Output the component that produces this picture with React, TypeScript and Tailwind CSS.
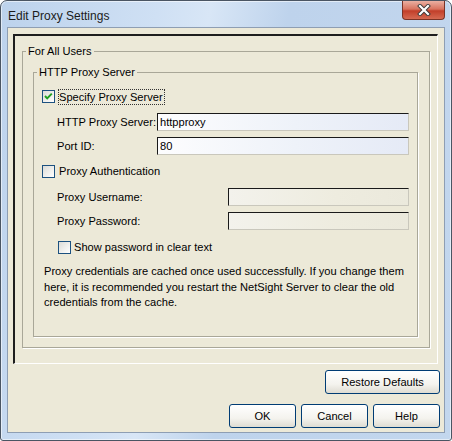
import React from 'react';

function Checkbox({ checked }: { checked?: boolean }) {
  return (
    <div className="w-[13px] h-[13px] shrink-0 border border-[#1c5180] bg-[linear-gradient(135deg,#dcdcd7,#ffffff)] flex items-center justify-center">
      {checked && (
        <svg width="11" height="11" viewBox="0 0 11 11">
          <polyline points="2,5 4.2,7.4 8.8,2.6" fill="none" stroke="#21a121" strokeWidth="2" />
        </svg>
      )}
    </div>
  );
}

function TextField({ value, disabled }: { value?: string; disabled?: boolean }) {
  return (
    <div
      className={
        'flex-1 h-[18px] border-t border-l border-t-[#1a1a1a] border-l-[#1a1a1a] border-r border-b border-r-[#c9c7bc] border-b-[#c9c7bc] pl-[2px] leading-[16px] ' +
        (disabled
          ? 'bg-[linear-gradient(to_right,#f3f2ec,#eeecdf_60%,#ebe9dc)]'
          : 'bg-[linear-gradient(to_right,#fdfdfe,#eef2f9_55%,#e5eaf6)]')
      }
    >
      {value}
    </div>
  );
}

function Button({ label, width }: { label: string; width: string }) {
  return (
    <button
      className={
        width +
        ' h-[24px] rounded-[3px] border border-[#003c74] bg-[linear-gradient(to_bottom,#ffffff,#f4f3ee_60%,#dedcd2)] text-[11.1px] text-black'
      }
    >
      {label}
    </button>
  );
}

export default function App() {
  return (
    <div className="w-[452px] h-[441px] font-['Liberation_Sans',Arial,sans-serif] text-[11.1px] text-black">
      <div className="flex flex-col h-full rounded-t-[7px] rounded-b-[3px] border border-[#4a5563] bg-[linear-gradient(100deg,#bcd2ec,#cfe0f4_30%,#d8e6f6_40%,#bed3ec_55%,#c3d7ee)] shadow-[inset_0_0_0_1px_rgba(255,255,255,0.55)]">
        {/* title bar */}
        <div className="h-[26px] flex justify-between pl-[7px] pr-[6px]">
          <div className="text-[12px] leading-[26px] text-[#1b1b1b] pt-[2px]">Edit Proxy Settings</div>
          <div className="w-[43px] h-[19px] rounded-b-[4px] border border-t-0 border-[#7a3326] bg-[linear-gradient(to_bottom,#eab0a2,#d8735f_45%,#c23f2a_55%,#d66a52)] flex items-center justify-center">
            <svg width="14" height="12" viewBox="0 0 14 12">
              <path d="M3 2 L11 10 M11 2 L3 10" stroke="#3a3a3a" strokeWidth="4" strokeLinecap="square" />
              <path d="M3 2 L11 10 M11 2 L3 10" stroke="#ffffff" strokeWidth="2.2" strokeLinecap="square" />
            </svg>
          </div>
        </div>

        {/* client area */}
        <div className="flex-1 mx-[6px] mb-[7px] border border-[#8e9eb3] bg-[#ece9d8] flex flex-col">
          <div className="flex-1 mt-[6px] ml-[5px] mr-[6px] border-t-2 border-l-2 border-t-[#1e1e1e] border-l-[#1e1e1e] border-r border-b border-r-white border-b-white flex flex-col">
            <fieldset className="mt-[8px] mx-[7px] border border-[#a9a798] shadow-[1px_1px_0_#fff]">
              <legend className="ml-[3px] px-[2px] leading-[14px]">For All Users</legend>

              <fieldset className="mt-[7px] ml-[10px] mr-[11px] mb-[10px] border border-[#a9a798] shadow-[1px_1px_0_#fff]">
                <legend className="ml-[3px] px-[2px] leading-[14px]">HTTP Proxy Server</legend>

                <div className="mt-[9px] pl-[8px] h-[17px] flex items-center">
                  <Checkbox checked />
                  <span className="ml-[3px] h-[16px] leading-[14px] border border-dotted border-[#333] pr-[1px]">Specify Proxy Server</span>
                </div>

                <div className="mt-[8px] pl-[23px] pr-[8px] flex items-center">
                  <span className="w-[100px]">HTTP Proxy Server:</span>
                  <TextField value="httpproxy" />
                </div>
                <div className="mt-[6px] pl-[23px] pr-[8px] flex items-center">
                  <span className="w-[100px]">Port ID:</span>
                  <TextField value="80" />
                </div>

                <div className="mt-[8px] pl-[8px] h-[17px] flex items-center">
                  <Checkbox />
                  <span className="ml-[4px]">Proxy Authentication</span>
                </div>

                <div className="mt-[8px] pl-[23px] pr-[8px] flex items-center">
                  <span className="w-[171px]">Proxy Username:</span>
                  <TextField disabled />
                </div>
                <div className="mt-[6px] pl-[23px] pr-[8px] flex items-center">
                  <span className="w-[171px]">Proxy Password:</span>
                  <TextField disabled />
                </div>

                <div className="mt-[9px] pl-[24px] h-[17px] flex items-center">
                  <Checkbox />
                  <span className="ml-[3px]">Show password in clear text</span>
                </div>

                <p className="mt-[8px] pl-[10px] pb-[25px] leading-[15.5px] whitespace-nowrap">
                  Proxy credentials are cached once used successfully. If you change them
                  <br />
                  here, it is recommended you restart the NetSight Server to clear the old
                  <br />
                  credentials from the cache.
                </p>
              </fieldset>
            </fieldset>
          </div>

          <div className="mt-[6px] pr-[4px] flex justify-end">
            <Button label="Restore Defaults" width="w-[115px]" />
          </div>
          <div className="mt-[10px] mb-[4px] pr-[4px] flex justify-end gap-[5px]">
            <Button label="OK" width="w-[67px]" />
            <Button label="Cancel" width="w-[67px]" />
            <Button label="Help" width="w-[67px]" />
          </div>
        </div>
      </div>
    </div>
  );
}
